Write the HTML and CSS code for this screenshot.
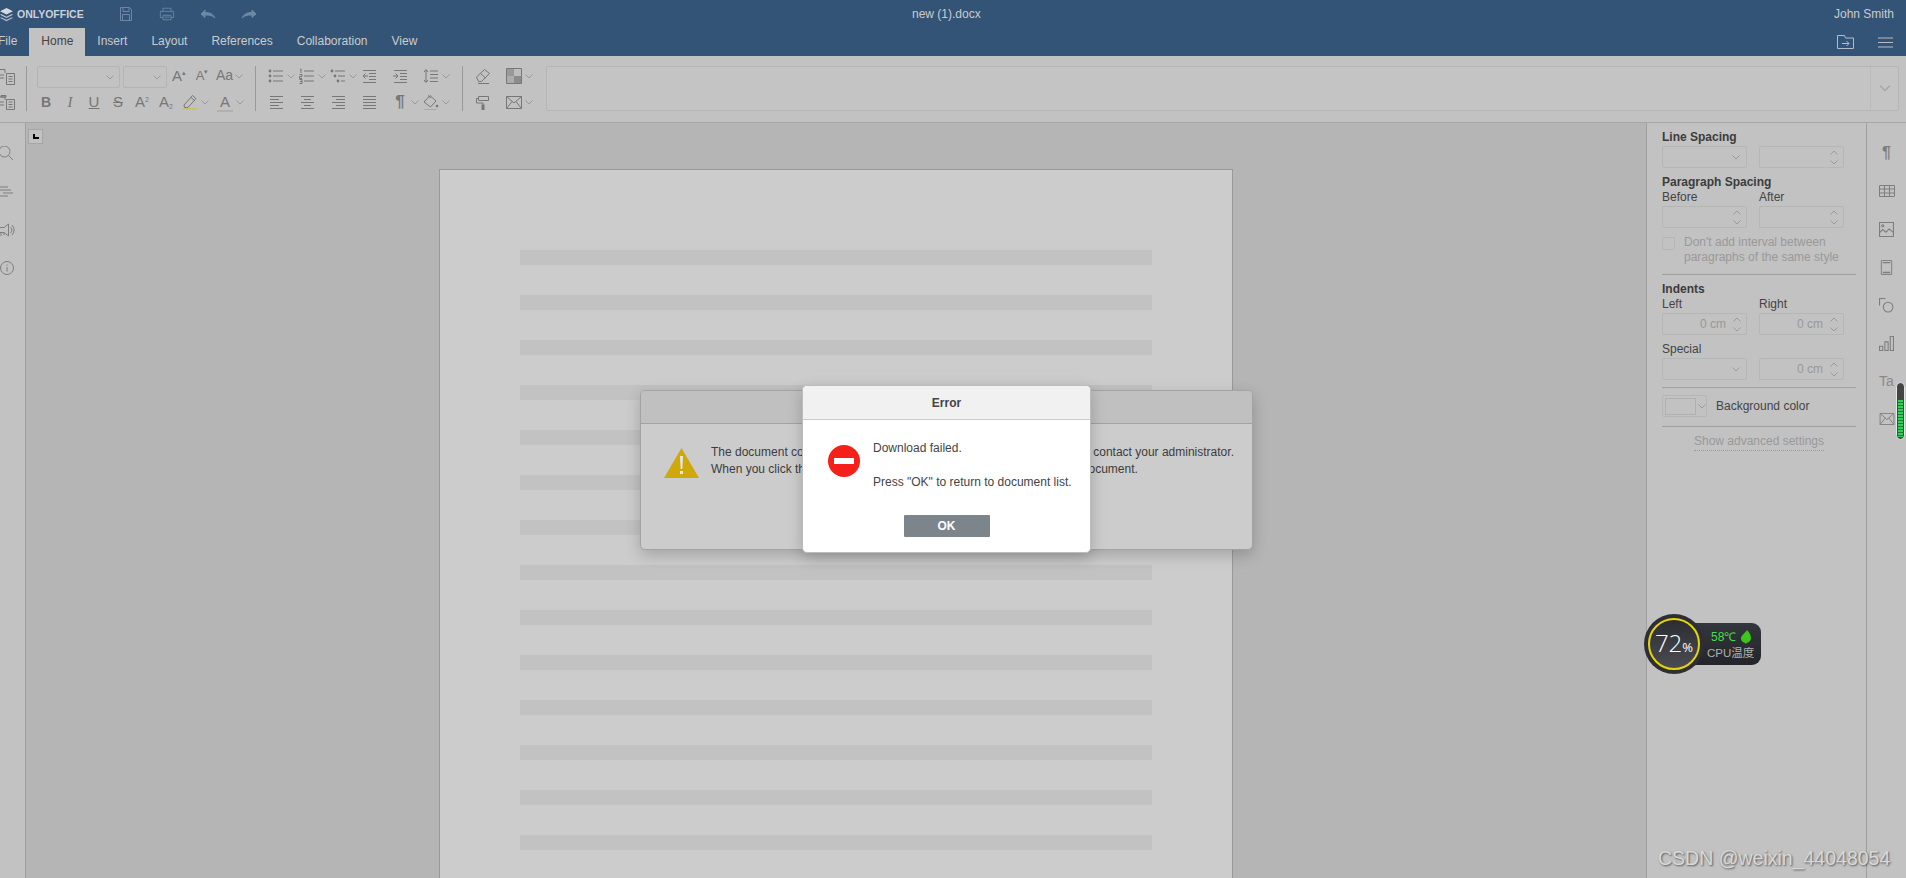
FILE: index.html
```html
<!DOCTYPE html>
<html lang="en">
<head>
<meta charset="utf-8">
<title>new (1).docx</title>
<link rel="stylesheet" href="styles.css">
</head>
<body>
<svg class="defs" width="0" height="0" aria-hidden="true">
  <symbol id="logo" viewBox="0 0 14 14"><path d="M7 1 13 4 7 7 1 4Z" fill="#d5d9df" stroke="none"/><path d="M2 6.6 1 7.2 7 10.2 13 7.2 12 6.6 7 9Z" fill="#c3c9d1" stroke="none"/><path d="M2 9.6 1 10.2 7 13.2 13 10.2 12 9.6 7 12Z" fill="#aeb6c1" stroke="none"/></symbol>
  <symbol id="save" viewBox="0 0 16 16"><path d="M2.5 1.5h9l2 2v11h-11zM5 1.5v4h6v-4M4.500 14.500v-6h7v6"/></symbol>
  <symbol id="print" viewBox="0 0 18 16"><path d="M4.500 5V1.500h9V5M4.500 12H1.500V5h15v7h-3M4.500 9.500h9v5h-9zM6 11.500h6"/></symbol>
  <symbol id="undo" viewBox="0 0 16 12"><path d="M1 6 5 2v2.500c5 0 8 1.500 10 5.500-2.500-2.500-5-3-10-3V9.500Z" fill="currentColor" stroke="currentColor"/></symbol>
  <symbol id="redo" viewBox="0 0 16 12"><path d="M15 6 11 2v2.500c-5 0-8 1.500-10 5.500 2.500-2.500 5-3 10-3V9.500Z" fill="currentColor" stroke="currentColor"/></symbol>
  <symbol id="folder" viewBox="0 0 17 14"><path d="M.5.500h7l1 2.500h8v10.500H.5zM5 8.500h7M9.500 6l2.500 2.500L9.500 11"/></symbol>
  <symbol id="burger" viewBox="0 0 15 11"><path d="M0 1h15M0 5.500h15M0 10h15"/></symbol>
  <symbol id="chev" viewBox="0 0 8 5"><path d="M.5.500 4 4 7.500.500"/></symbol>
  <symbol id="up" viewBox="0 0 8 5"><path d="M.5 4.500 4 1 7.500 4.500"/></symbol>
  <symbol id="copy" viewBox="0 0 16 16"><path d="M-2 .500H5V4M6.500 4.500h8v11h-8zM8.500 7.500h4M8.500 10h4M8.500 12.500h4M-1 6h5M-1 9h5"/></symbol>
  <symbol id="paste" viewBox="0 0 16 16"><path d="M-2 3H5V6M6.500 5.500h8v10h-8zM8.500 8h4M8.500 10.500h4M8.500 13h4M-1 8h5M-1 11h5M1 1.500h5V3H1z"/></symbol>
  <symbol id="bul" viewBox="0 0 16 16"><circle cx="2" cy="3" r="1.400" fill="currentColor" stroke="none"/><circle cx="2" cy="8" r="1.400" fill="currentColor" stroke="none"/><circle cx="2" cy="13" r="1.400" fill="currentColor" stroke="none"/><path d="M5 3h10M5 8h10M5 13h10"/></symbol>
  <symbol id="num" viewBox="0 0 16 16"><path d="M5 3h10M5 8h10M5 13h10M1 1.500 2 1v4M.5 6.500h2.500v2H.5v2H3M.5 11.500h2.500v4H.5M1 13.500h2"/></symbol>
  <symbol id="multi" viewBox="0 0 16 16"><circle cx="2" cy="3" r="1.400" fill="currentColor" stroke="none"/><circle cx="5" cy="8" r="1.400" fill="currentColor" stroke="none"/><circle cx="8" cy="13" r="1.400" fill="currentColor" stroke="none"/><path d="M5 3h10M8 8h7M11 13h4"/></symbol>
  <symbol id="outd" viewBox="0 0 16 16"><path d="M2 2.500h13M8 5.500h7M8 8.500h7M8 11.500h7M2 14.500h13M7 8H2M4.500 5.500 2 8l2.500 2.500"/></symbol>
  <symbol id="ind" viewBox="0 0 16 16"><path d="M2 2.500h13M8 5.500h7M8 8.500h7M8 11.500h7M2 14.500h13M1 8h5M3.500 5.500 6 8l-2.500 2.500"/></symbol>
  <symbol id="lsp" viewBox="0 0 16 16"><path d="M3 2v12M1 4 3 1.500 5 4M1 12l2 2.500L5 12M7 3h8M7 6.500h8M7 10h8M7 13.500h8"/></symbol>
  <symbol id="al" viewBox="0 0 16 16"><path d="M2 2.500h13M2 5.500h9M2 8.500h13M2 11.500h9M2 14.500h13"/></symbol>
  <symbol id="ac" viewBox="0 0 16 16"><path d="M2 2.500h13M5 5.500h7M2 8.500h13M5 11.500h7M2 14.500h13"/></symbol>
  <symbol id="ar" viewBox="0 0 16 16"><path d="M2 2.500h13M6 5.500h9M2 8.500h13M6 11.500h9M2 14.500h13"/></symbol>
  <symbol id="aj" viewBox="0 0 16 16"><path d="M2 2.500h13M2 5.500h13M2 8.500h13M2 11.500h13M2 14.500h13"/></symbol>
  <symbol id="hl" viewBox="0 0 16 16"><path d="M2 11 10.500 1.500 14 4.500 6 13.500H2.500zM9 3.500l3.500 3"/><path d="M1 14h14v3H1z" fill="#c9c267" stroke="none"/></symbol>
  <symbol id="fill" viewBox="0 0 16 16"><path d="M1 8 7 1.500 13 7 7.500 13zM5 1.500 8 4"/><circle cx="14" cy="12" r="1.300" fill="currentColor" stroke="none"/><path d="M1.500 15.500h12v2h-12z" stroke="#aaa"/></symbol>
  <symbol id="eraser" viewBox="0 0 16 16"><path d="M1.500 9 9.500 1.500l5 4-8 8H3.500zM5.500 5.500l5 4.500M3 15.500h11"/></symbol>
  <symbol id="scheme" viewBox="0 0 16 16"><path d="M1 1h7v7H1z" fill="#999" stroke="none"/><path d="M8 1h7v7H8z" fill="#bdbdbd" stroke="none"/><path d="M1 8h7v7H1z" fill="#acacac" stroke="none"/><path d="M8 8h7v7H8z" fill="#8c8c8c" stroke="none"/><path d="M.5.500h15v15H.5z"/></symbol>
  <symbol id="roller" viewBox="0 0 16 16"><path d="M3.500 2.500h10v4h-10zM3.500 4.500H1.500v4.500h6.500v2"/><path d="M6.500 10.500h3v6h-3z" fill="currentColor" stroke="none"/></symbol>
  <symbol id="mail" viewBox="0 0 16 13"><path d="M.5.500h15v12H.5zM.5.500 8 7l7.500-6.500M.5 12.500 6 5.500M15.500 12.500 10 5.500"/></symbol>
  <symbol id="table" viewBox="0 0 16 12"><path d="M.5.500h15v11H.5zM.5 4h15M.5 8h15M5.500.5v11M10.500.5v11"/></symbol>
  <symbol id="image" viewBox="0 0 14 14"><path d="M.5.500h13v13H.5zM.5 10l3-3 3 2.500 3-3 4 3.500"/><circle cx="3.500" cy="3.500" r="1"/></symbol>
  <symbol id="header" viewBox="0 0 12 16"><path d="M.5.500h11v15H.5z"/><path d="M2 2h8v1.500H2zM2 12.500h8V14H2z" fill="currentColor" stroke="none"/></symbol>
  <symbol id="shape" viewBox="0 0 14 14"><path d="M6 .5H.5V7"/><circle cx="8.500" cy="8.500" r="4.500"/></symbol>
  <symbol id="chart" viewBox="0 0 14 14"><path d="M.5 9.500h3v4h-3zM5.500 5.500h3v8h-3zM10.500.5h3v13h-3z"/></symbol>
  <symbol id="search" viewBox="0 0 16 16"><circle cx="4.500" cy="5.500" r="5.500"/><path d="M8.500 9.500 13 14"/></symbol>
  <symbol id="toc" viewBox="0 0 16 16"><path d="M0 3h8M0 6h11M3 9h10M0 12h8"/></symbol>
  <symbol id="speak" viewBox="0 0 16 16"><path d="M-1 5.500h5L8.500 2v12L4 10.500H-1zM1 10.500V14M4 10.500V13M10.500 5a4 4 0 0 1 0 6M12 3a7 7 0 0 1 0 10"/></symbol>
  <symbol id="info" viewBox="0 0 16 16"><circle cx="7" cy="8" r="6.500"/><path d="M7 7v4.500M7 4.500v1.200"/></symbol>
  <symbol id="leaf" viewBox="0 0 10 14"><path d="M6 0C8.500 3 10 5 10 8 10 11 7.500 12.500 5.500 13L5 14H4.300L4.600 13C2 12.800 0 11 0 8.500 0 5 4 3.500 6 0Z" fill="#3cc61a" stroke="none"/></symbol>
</svg>

<div class="app">
  <header class="head">
    <div class="titlebar">
      <div class="brand"><svg class="logo"><use href="#logo"/></svg><span>ONLYOFFICE</span></div>
      <div class="quick">
        <svg class="qi"><use href="#save"/></svg>
        <svg class="qi"><use href="#print"/></svg>
        <svg class="qi"><use href="#undo"/></svg>
        <svg class="qi"><use href="#redo"/></svg>
      </div>
      <div class="doc-title">new (1).docx</div>
      <div class="user">John Smith</div>
    </div>
    <nav class="tabs">
      <a class="tab first">File</a>
      <a class="tab active">Home</a>
      <a class="tab">Insert</a>
      <a class="tab">Layout</a>
      <a class="tab">References</a>
      <a class="tab">Collaboration</a>
      <a class="tab">View</a>
      <div class="head-actions">
        <svg class="folder"><use href="#folder"/></svg>
        <svg class="burger"><use href="#burger"/></svg>
      </div>
    </nav>
  </header>

  <section class="toolbar">
    <div class="group g-clip">
      <div class="row"><svg class="ic"><use href="#copy"/></svg></div>
      <div class="row"><svg class="ic"><use href="#paste"/></svg></div>
    </div>
    <div class="sep"></div>
    <div class="group g-font">
      <div class="row">
        <div class="combo c-name"><svg class="chev"><use href="#chev"/></svg></div>
        <div class="combo c-size"><svg class="chev"><use href="#chev"/></svg></div>
        <span class="tx c-24">A<small>▴</small></span>
        <span class="tx c-22 tx-sm">A<small>▾</small></span>
        <span class="cell c-case"><span class="tx tx-w tx-case">Aa</span><svg class="chev"><use href="#chev"/></svg></span>
      </div>
      <div class="row r-fmt">
        <b class="tx c-24 tx-b">B</b>
        <i class="tx c-24 tx-i">I</i>
        <u class="tx c-24">U</u>
        <s class="tx c-24">S</s>
        <span class="tx c-24">A<small class="top">2</small></span>
        <span class="tx c-24">A<small class="low">2</small></span>
        <span class="cell c-hl"><svg class="ic"><use href="#hl"/></svg><svg class="chev"><use href="#chev"/></svg></span>
        <span class="cell c-color"><span class="tx tx-w tx-bar">A</span><svg class="chev"><use href="#chev"/></svg></span>
      </div>
    </div>
    <div class="sep s-2"></div>
    <div class="group g-para">
      <div class="row">
        <span class="cell"><svg class="ic"><use href="#bul"/></svg><svg class="chev"><use href="#chev"/></svg></span>
        <span class="cell"><svg class="ic"><use href="#num"/></svg><svg class="chev"><use href="#chev"/></svg></span>
        <span class="cell"><svg class="ic"><use href="#multi"/></svg><svg class="chev"><use href="#chev"/></svg></span>
        <span class="cell"><svg class="ic"><use href="#outd"/></svg></span>
        <span class="cell"><svg class="ic"><use href="#ind"/></svg></span>
        <span class="cell"><svg class="ic"><use href="#lsp"/></svg><svg class="chev"><use href="#chev"/></svg></span>
      </div>
      <div class="row">
        <span class="cell"><svg class="ic"><use href="#al"/></svg></span>
        <span class="cell"><svg class="ic"><use href="#ac"/></svg></span>
        <span class="cell"><svg class="ic"><use href="#ar"/></svg></span>
        <span class="cell"><svg class="ic"><use href="#aj"/></svg></span>
        <span class="cell"><span class="tx tx-w tx-p">¶</span><svg class="chev"><use href="#chev"/></svg></span>
        <span class="cell"><svg class="ic"><use href="#fill"/></svg><svg class="chev"><use href="#chev"/></svg></span>
      </div>
    </div>
    <div class="sep s-3"></div>
    <div class="group g-misc">
      <div class="row">
        <span class="cell"><svg class="ic"><use href="#eraser"/></svg></span>
        <span class="cell"><svg class="ic"><use href="#scheme"/></svg><svg class="chev"><use href="#chev"/></svg></span>
      </div>
      <div class="row">
        <span class="cell"><svg class="ic"><use href="#roller"/></svg></span>
        <span class="cell"><svg class="ic ic-mail"><use href="#mail"/></svg><svg class="chev"><use href="#chev"/></svg></span>
      </div>
    </div>
    <div class="styles-box">
      <div class="styles-more"><svg class="chev-lg"><use href="#chev"/></svg></div>
    </div>
  </section>

  <main class="main">
    <aside class="left-bar">
      <svg class="lb"><use href="#search"/></svg>
      <svg class="lb"><use href="#toc"/></svg>
      <svg class="lb"><use href="#speak"/></svg>
      <svg class="lb"><use href="#info"/></svg>
    </aside>
    <div class="canvas">
      <div class="tabstop"><span class="tabstop-mark"></span></div>
      <div class="page">
        <div class="ln"></div><div class="ln"></div><div class="ln"></div><div class="ln"></div><div class="ln"></div>
        <div class="ln"></div><div class="ln"></div><div class="ln"></div><div class="ln"></div><div class="ln"></div>
        <div class="ln"></div><div class="ln"></div><div class="ln"></div><div class="ln"></div><div class="ln"></div>
      </div>
    </div>
    <aside class="panel">
      <div class="lbl strong">Line Spacing</div>
      <div class="pair">
        <div class="inp"><svg class="chev"><use href="#chev"/></svg></div>
        <div class="inp spin"><span class="spins"><svg class="sp"><use href="#up"/></svg><svg class="sp"><use href="#chev"/></svg></span></div>
      </div>
      <div class="lbl strong m7">Paragraph Spacing</div>
      <div class="pair lbls"><div class="lbl">Before</div><div class="lbl">After</div></div>
      <div class="pair">
        <div class="inp spin"><span class="spins"><svg class="sp"><use href="#up"/></svg><svg class="sp"><use href="#chev"/></svg></span></div>
        <div class="inp spin"><span class="spins"><svg class="sp"><use href="#up"/></svg><svg class="sp"><use href="#chev"/></svg></span></div>
      </div>
      <div class="check">
        <span class="box"></span>
        <span class="check-text">Don't add interval between<br>paragraphs of the same style</span>
      </div>
      <hr class="rule">
      <div class="lbl strong m7">Indents</div>
      <div class="pair lbls"><div class="lbl">Left</div><div class="lbl">Right</div></div>
      <div class="pair">
        <div class="inp spin"><span class="val">0 cm</span><span class="spins"><svg class="sp"><use href="#up"/></svg><svg class="sp"><use href="#chev"/></svg></span></div>
        <div class="inp spin"><span class="val">0 cm</span><span class="spins"><svg class="sp"><use href="#up"/></svg><svg class="sp"><use href="#chev"/></svg></span></div>
      </div>
      <div class="lbl m7">Special</div>
      <div class="pair">
        <div class="inp"><svg class="chev"><use href="#chev"/></svg></div>
        <div class="inp spin"><span class="val">0 cm</span><span class="spins"><svg class="sp"><use href="#up"/></svg><svg class="sp"><use href="#chev"/></svg></span></div>
      </div>
      <hr class="rule r7">
      <div class="bg-row">
        <div class="bg-btn"><span class="swatch"></span><svg class="chev"><use href="#chev"/></svg></div>
        <span class="bg-text">Background color</span>
      </div>
      <hr class="rule">
      <div class="adv"><span class="adv-link">Show advanced settings</span></div>
    </aside>
    <aside class="right-bar">
      <div class="rb"><span class="rb-p">¶</span></div>
      <div class="rb"><svg class="rb-ic rb-table"><use href="#table"/></svg></div>
      <div class="rb"><svg class="rb-ic"><use href="#image"/></svg></div>
      <div class="rb"><svg class="rb-ic"><use href="#header"/></svg></div>
      <div class="rb"><svg class="rb-ic"><use href="#shape"/></svg></div>
      <div class="rb"><svg class="rb-ic"><use href="#chart"/></svg></div>
      <div class="rb"><span class="rb-ta">Ta</span></div>
      <div class="rb"><svg class="rb-ic rb-table"><use href="#mail"/></svg></div>
    </aside>
  </main>
</div>

<div class="dlg warn">
  <div class="dlg-head"></div>
  <div class="warn-body">
    <svg class="warn-ic" viewBox="0 0 35 30"><path d="M17.500 0 35 30H0Z" fill="#cfa90a"/><path d="M16 8h3l-.6 13h-1.800zM16 23h3v3h-3z" fill="#e6e6e6"/></svg>
    <p class="warn-text">The document could not be saved. Please check connection settings or contact your administrator.<br>When you click the 'OK' button, you will be prompted to download the document.</p>
  </div>
</div>

<div class="dlg err">
  <div class="err-head">Error</div>
  <div class="err-body">
    <span class="stop"><span class="stop-bar"></span></span>
    <p class="err-text">Download failed.<br><br>Press "OK" to return to document list.</p>
  </div>
  <div class="err-foot"><button class="ok">OK</button></div>
</div>

<div class="meter">
  <div class="meter-fill"></div>
</div>

<div class="cpu">
  <div class="cpu-pill">
    <div class="cpu-temp">58℃ <svg class="leaf"><use href="#leaf"/></svg></div>
    <div class="cpu-name">CPU温度</div>
  </div>
  <div class="cpu-ring"><div class="cpu-inner">72<small>%</small></div></div>
</div>

<div class="mark">CSDN @weixin_44048054</div>
</body>
</html>
```
FILE: styles.css
```css
* { box-sizing: border-box; }
html, body { margin: 0; height: 878px; overflow: hidden; }
body { font-family: "Liberation Sans", Arial, sans-serif; font-size: 12px; color: #444; background: #b5b5b5; }
.defs { position: absolute; }
svg { fill: none; stroke: currentColor; stroke-width: 1; overflow: visible; display: block; flex: none; }
.app { display: flex; flex-direction: column; height: 878px; }

/* Header */
.head { background: #335377; color: #ccc; flex: none; height: 56px; }
.titlebar { height: 28px; display: flex; align-items: center; position: relative; }
.brand { display: flex; align-items: center; width: 119px; font-weight: bold; font-size: 10.500px; color: #ccd2da; margin-left: -1px; }
.logo { width: 15px; height: 15px; margin: 0 3px 0 0; }
.quick { display: flex; align-items: center; color: #6d87a4; }
.qi { width: 16px; height: 16px; margin-right: 25px; }
.doc-title { position: absolute; left: 912px; top: 7px; line-height: 14px; font-size: 12px; }
.user { margin-left: auto; margin-right: 12px; font-size: 12px; }
.tabs { height: 28px; display: flex; align-items: stretch; }
.tab { padding: 0 12px; line-height: 26px; font-size: 12px; color: #ccc; }
.tab.first { padding-left: 0; margin-left: -2px; }
.tab.active { background: #c2c2c2; color: #444; }
.head-actions { margin-left: auto; display: flex; align-items: center; color: #b5bcc6; }
.folder { width: 17px; height: 14px; margin-right: 24px; }
.burger { width: 15px; height: 11px; margin-right: 13px; }

/* Toolbar */
.toolbar { flex: none; height: 67px; background: #c2c2c2; border-bottom: 1px solid #a6a6a6; display: flex; align-items: flex-start; padding: 10px 7px 0 0; color: #777; }
.group { display: flex; flex-direction: column; gap: 3px; }
.row { display: flex; align-items: center; height: 22px; }
.row:first-child .cell, .row:first-child .tx { position: relative; top: -1px; }
.sep { width: 1px; height: 45px; background: #999; flex: none; }
.g-clip { width: 26px; overflow: hidden; }
.g-font { margin-left: 10px; width: 207px; }
.r-fmt { margin-left: -3px; }
.s-2 { margin-left: 11px; }
.g-para { margin-left: 12px; width: 186px; }
.s-3 { margin-left: 8px; }
.g-misc { margin-left: 12px; width: 62px; }
.cell { width: 31px; display: flex; align-items: center; gap: 3px; flex: none; height: 22px; }
.ic { width: 16px; height: 16px; }
.ic-mail { height: 13px; }
.chev { width: 8px; height: 5px; color: #9a9a9a; }
.combo { height: 22px; border: 1px solid #b4b4b4; border-radius: 2px; display: flex; align-items: center; justify-content: flex-end; padding-right: 5px; flex: none; }
.c-name { width: 83px; margin-right: 3px; }
.c-size { width: 44px; }
.tx { font-size: 15px; line-height: 22px; color: #777; text-align: center; flex: none; }
.tx small { font-size: 7px; line-height: 1; vertical-align: 6px; }
.tx small.top { vertical-align: 5px; }
.tx small.low { vertical-align: -2px; }
.tx-sm { font-size: 13px; }
.tx-b { font-weight: bold; font-size: 14px; }
.tx-i { font-family: "Liberation Serif", serif; }
.tx-w { width: 16px; }
.tx-case { font-size: 14px; text-align: left; width: 17px; }
.tx-p { font-size: 17px; font-weight: bold; }
.tx-bar { border-bottom: 2px solid #b0b0b0; line-height: 17px; }
.c-24 { width: 24px; }
.c-22 { width: 22px; }
.c-case { margin-left: 3px; width: 27px; gap: 2px; }
.c-hl { width: 35px; margin-left: 4px; }
.c-color { width: 27px; }
.styles-box { flex: 1; height: 45px; margin-left: 9px; background: #c4c4c4; border: 1px solid #b6b6b6; border-radius: 2px; display: flex; justify-content: flex-end; }
.styles-more { width: 28px; border-left: 1px solid #bbb; display: flex; align-items: center; justify-content: center; }
.chev-lg { width: 12px; height: 7px; color: #a5a5a5; }

/* Main */
.main { flex: 1; display: flex; min-height: 0; }
.left-bar { width: 26px; flex: none; background: #c2c2c2; border-right: 1px solid #a0a0a0; display: flex; flex-direction: column; padding-top: 23px; gap: 22px; color: #7e7e7e; }
.lb { width: 16px; height: 16px; }
.canvas { flex: 1; position: relative; display: flex; justify-content: center; padding-top: 46px; overflow: hidden; background: #b5b5b5; }
.tabstop { position: absolute; left: 2px; top: 6px; width: 15px; height: 15px; background: #c2c2c2; border: 1px solid #a6a6a6; }
.tabstop-mark { position: absolute; left: 4px; top: 4px; width: 6px; height: 5px; border-left: 2px solid #000; border-bottom: 2px solid #000; }
.page { width: 794px; height: 1123px; flex: none; background: #ccc; border: 1px solid #999; padding: 80px 80px 0; display: flex; flex-direction: column; gap: 30px; }
.ln { height: 15px; width: 632px; background: #c2c2c2; flex: none; }

/* Right panel */
.panel { width: 221px; flex: none; background: #c2c2c2; border-left: 1px solid #a0a0a0; border-right: 1px solid #a0a0a0; padding: 7px 10px 0 15px; font-size: 12px; }
.lbl { line-height: 14px; height: 14px; color: #444; font-size: 12px; }
.strong { font-weight: bold; color: #3c3c3c; }
.m7 { margin-top: 7px; }
.pair { display: flex; gap: 12px; margin-top: 2px; }
.pair.lbls { margin-top: 1px; }
.pair .lbl { width: 85px; }
.inp { width: 85px; height: 22px; border: 1px solid #b6b6b6; border-radius: 2px; display: flex; align-items: center; justify-content: flex-end; padding-right: 6px; color: #999; }
.inp.spin { padding-right: 5px; gap: 7px; }
.val { color: #989898; font-size: 12px; }
.spins { display: flex; flex-direction: column; gap: 5px; }
.sp { width: 8px; height: 5px; color: #9a9a9a; }
.check { display: flex; margin-top: 7px; gap: 9px; }
.box { width: 13px; height: 13px; border: 1px solid #b6b6b6; border-radius: 2px; flex: none; margin-top: 2px; }
.check-text { line-height: 15px; color: #999; }
.rule { border: 0; height: 1px; background: #a0a0a0; margin: 9px 0 0; width: 194px; }
.rule.r7 { margin-top: 7px; }
.bg-row { display: flex; align-items: center; margin-top: 7px; height: 22px; }
.bg-btn { width: 45px; height: 22px; border: 1px solid #b6b6b6; border-radius: 2px; display: flex; align-items: center; padding-left: 2px; gap: 2px; }
.swatch { width: 31px; height: 17px; border: 1px solid #b0b0b0; }
.bg-text { margin-left: 9px; color: #444; }
.adv { margin-top: 7px; text-align: center; line-height: 14px; }
.adv-link { color: #999; border-bottom: 1px dotted #999; padding-bottom: 2px; display: inline-block; }
.right-bar { width: 39px; flex: none; background: #c2c2c2; padding-top: 11px; color: #7e7e7e; }
.rb { height: 38px; display: flex; align-items: center; justify-content: center; }
.rb-ic { width: 15px; height: 15px; }
.rb-table { width: 16px; height: 12px; }
.rb-p { font-size: 16px; font-weight: bold; color: #7e7e7e; }
.rb-ta { font-size: 14px; color: #8a8a8a; }

/* Dialogs */
.dlg { position: absolute; background: #fff; border-radius: 5px; box-shadow: 0 5px 15px rgba(0, 0, 0, .2); }
.warn { left: 640px; top: 390px; width: 613px; height: 160px; background: #ccc; border: 1px solid #a3a3a3; overflow: hidden; }
.dlg-head { height: 33px; background: #c0c0c0; border-bottom: 1px solid #a3a3a3; }
.warn-body { display: flex; padding: 24px 0 0 23px; }
.warn-ic { width: 35px; height: 30px; stroke: none; flex: none; }
.warn-text { margin: -4px 0 0 12px; line-height: 17px; color: #3c3c3c; white-space: nowrap; font-size: 12px; }
.err { left: 802px; top: 385px; width: 289px; height: 168px; border: 1px solid #bdbdbd; overflow: hidden; }
.err-head { height: 34px; background: #f1f1f1; border-bottom: 1px solid #cbcbcb; text-align: center; font-weight: bold; line-height: 34px; color: #444; }
.err-body { display: flex; padding: 25px 0 0 25px; }
.stop { width: 32px; height: 32px; border-radius: 50%; background: #f5201a; flex: none; display: flex; align-items: center; justify-content: center; }
.stop-bar { width: 20px; height: 6px; background: #fff; }
.err-text { margin: -5px 0 0 13px; line-height: 17px; color: #444; white-space: nowrap; font-size: 12px; }
.err-foot { display: flex; justify-content: center; margin-top: 24px; }
.ok { width: 86px; height: 22px; background: #7d858c; border: 0; border-radius: 1px; color: #fff; font: bold 12px "Liberation Sans", Arial, sans-serif; padding: 0; }

/* Floating desktop widgets */
.meter { position: absolute; left: 1896px; top: 382px; width: 9px; height: 58px; background: #454545; border: 1px solid #e8e8e8; border-radius: 5px; padding: 17px 1px 2px; }
.meter-fill { height: 100%; background: repeating-linear-gradient(to bottom, #2fd257 0 2px, #1a7d35 2px 3px); }
.cpu { position: absolute; left: 1644px; top: 614px; width: 117px; height: 60px; }
.cpu-pill { position: absolute; left: 30px; right: 0; top: 9px; height: 42px; background: linear-gradient(#33363c, #23252a); border-radius: 9px; padding: 6px 0 0 33px; }
.cpu-temp { display: flex; align-items: center; gap: 5px; color: #49dd4e; font-size: 12px; line-height: 16px; padding-left: 4px; }
.leaf { width: 10px; height: 14px; }
.cpu-name { color: #b0b0b0; font-family: "Liberation Sans", "Noto Sans CJK SC", sans-serif; font-size: 11.500px; line-height: 16px; white-space: nowrap; }
.cpu-ring { position: absolute; left: 0; top: 0; width: 60px; height: 60px; border-radius: 50%; background: #2d2f34; padding: 4px; }
.cpu-inner { width: 52px; height: 52px; border-radius: 50%; border: 2px solid #e6d40c; background: linear-gradient(#2b2d33, #4a4c52); color: #fff; font-family: "Open Sans", sans-serif; font-weight: 300; font-size: 24px; line-height: 46px; text-align: center; white-space: nowrap; }
.cpu-inner small { font-size: 13px; font-weight: 400; }
.mark { position: absolute; left: 1658px; top: 847px; font-size: 19.500px; line-height: 22px; color: #d8d8d8; text-shadow: 1px 1px 2px rgba(0, 0, 0, .55); white-space: nowrap; }
```
